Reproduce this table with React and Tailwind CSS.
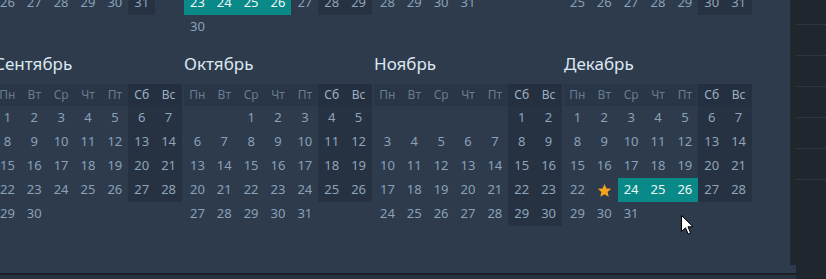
import React from "react";

const YEAR = 2014;
const MONTHS = [
  "Январь", "Февраль", "Март", "Апрель", "Май", "Июнь",
  "Июль", "Август", "Сентябрь", "Октябрь", "Ноябрь", "Декабрь",
];
const DAYS = ["Пн", "Вт", "Ср", "Чт", "Пт", "Сб", "Вс"];

const TEAL = { 5: [23, 24, 25, 26], 11: [24, 25, 26] };
const STAR = { 11: [23] };

function weeks(m) {
  const first = new Date(YEAR, m, 1);
  const offset = (first.getDay() + 6) % 7;
  const n = new Date(YEAR, m + 1, 0).getDate();
  const cells = [];
  for (let i = 0; i < offset; i++) cells.push(null);
  for (let d = 1; d <= n; d++) cells.push(d);
  while (cells.length % 7) cells.push(null);
  const rows = [];
  for (let i = 0; i < cells.length; i += 7) rows.push(cells.slice(i, i + 7));
  return rows;
}

function Star() {
  return (
    <svg width="15" height="15" viewBox="0 0 24 24">
      <path
        d="M12 1.5l3.1 7.1 7.7.7-5.8 5.1 1.7 7.6L12 18l-6.7 4 1.7-7.6L1.2 9.3l7.7-.7z"
        fill="#f7a21b"
      />
    </svg>
  );
}

function Month({ m }) {
  const rows = weeks(m);
  const teal = TEAL[m] || [];
  const star = STAR[m] || [];
  return (
    <div className="flex flex-col">
      <div className="h-[24px] mb-[8px] text-[17px] leading-[24px] text-[#dde7f0]">
        {MONTHS[m]}
      </div>
      <div className="grid grid-cols-7 h-[22px] text-[12px]">
        {DAYS.map((d, i) => (
          <div
            key={d}
            className={
              "flex items-center justify-center " +
              (i >= 5 ? "bg-[#243040] text-[#9fb0c2]" : "bg-[#293647] text-[#687c91]")
            }
          >
            {d}
          </div>
        ))}
      </div>
      {rows.map((row, ri) => (
        <div key={ri} className="grid grid-cols-7 h-[24px] text-[13px]">
          {row.map((d, ci) => {
            let cls = "flex items-center justify-center ";
            if (d === null) {
              cls += "";
            } else if (teal.includes(d)) {
              cls += "bg-[#0a8989] text-[#eef8f8]";
            } else if (ci >= 5) {
              cls += "bg-[#263241] text-[#8ea4ba]";
            } else {
              cls += "text-[#8aa1b8]";
            }
            return (
              <div key={ci} className={cls}>
                {d !== null && star.includes(d) ? <Star /> : d}
              </div>
            );
          })}
        </div>
      ))}
    </div>
  );
}

function Cursor() {
  return (
    <svg
      className="absolute left-[681px] top-[215px]"
      width="13"
      height="21"
      viewBox="0 0 13 21"
    >
      <path
        d="M0.5 0.5 L0.5 16.5 L4.5 12.8 L7.2 19 L9.6 18 L7 11.8 L12 11.8 Z"
        fill="#ffffff"
        stroke="#000000"
        strokeWidth="1"
        strokeLinejoin="miter"
      />
    </svg>
  );
}

export default function App() {
  return (
    <div
      className="relative w-[826px] h-[279px] flex overflow-hidden bg-[#20262d]"
      style={{ fontFamily: '"Segoe UI", "Noto Sans", "Open Sans", sans-serif' }}
    >
      <div className="w-[796px] flex flex-col">
        <div className="h-[273px] flex bg-[#2d3b4d]">
          <div className="w-[790px] overflow-hidden">
            <div className="-mt-[370px] -ml-[6px] grid grid-cols-[repeat(4,188px)] gap-x-[2px] gap-y-[13px]">
              {MONTHS.map((_, m) => (
                <Month key={m} m={m} />
              ))}
            </div>
          </div>
          <div className="w-[6px] flex flex-col">
            <div className="h-[265px] bg-[#1f262d]" />
          </div>
        </div>
        <div className="h-[2px] bg-[#1a2027]" />
        <div className="flex-1 bg-[#29333e]" />
      </div>
      <div className="w-[30px] flex flex-col bg-[#20262d]">
        <div className="h-[25px] border-b border-[#2e363f]" />
        <div className="h-[31px] border-b border-[#2e363f]" />
        <div className="h-[31px] border-b border-[#2e363f]" />
        <div className="h-[31px] border-b border-[#2e363f]" />
        <div className="h-[31px] border-b border-[#2e363f]" />
        <div className="h-[31px] border-b border-[#2e363f]" />
      </div>
      <Cursor />
    </div>
  );
}
